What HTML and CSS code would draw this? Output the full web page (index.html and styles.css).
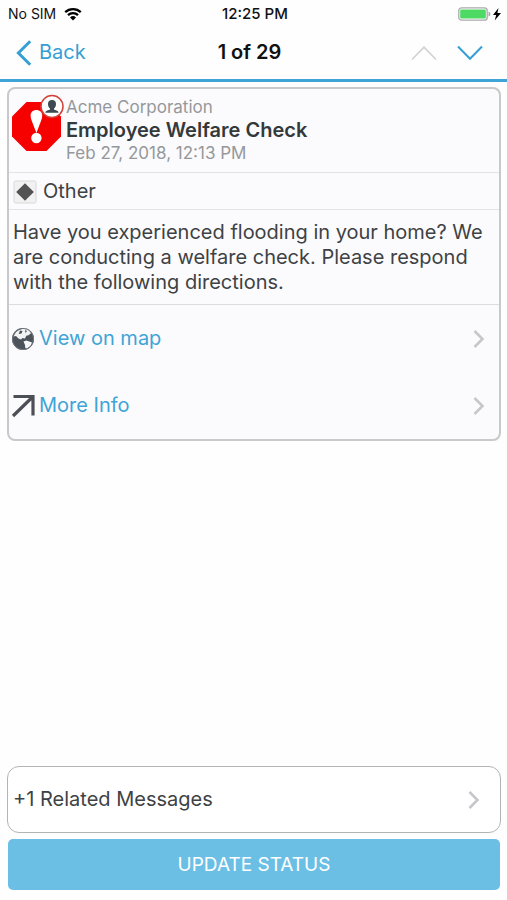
FILE: index.html
```html
<!DOCTYPE html>
<html lang="en">
<head>
<meta charset="utf-8">
<meta name="viewport" content="width=device-width, initial-scale=1">
<title>Employee Welfare Check</title>
<link rel="stylesheet" href="styles.css">
</head>
<body>
<div class="statusbar">
  <div class="carrier">
    <span>No SIM</span>
    <svg width="18" height="14" viewBox="0 0 18 14" aria-hidden="true">
      <path d="M1.2 5.2a11.2 11.2 0 0 1 15.6 0M4 8.2a7.2 7.2 0 0 1 10 0" fill="none" stroke="#000" stroke-width="2.3"/>
      <path d="M9 13.4 6 10.4a4.3 4.3 0 0 1 6 0z"/>
    </svg>
  </div>
  <span class="clock">12:25 PM</span>
  <div class="power">
    <svg width="44" height="14" viewBox="0 0 44 14" aria-hidden="true">
      <rect x=".8" y=".8" width="28.4" height="12.4" rx="2.8" fill="#fff" stroke="#aaa" stroke-width="1.3"/>
      <rect x="2.2" y="2.4" width="25.6" height="9.2" rx="1" fill="#4cd964"/>
      <path d="M30.5 4.5q2 .5 2 2.5t-2 2.5z" fill="#aaa"/>
      <path d="M40.5 1 35 8h3.2l-1.5 5.500 6.300-7.500h-3.600z"/>
    </svg>
  </div>
</div>
<header class="navbar">
  <button class="back" type="button">
    <svg width="16" height="26" viewBox="0 0 16 26" aria-hidden="true"><path d="M14.2 1.2 2.4 13l11.8 11.8" fill="none" stroke="currentColor" stroke-width="3"/></svg>
    <span>Back</span>
  </button>
  <h1 class="title">1 of 29</h1>
  <div class="pager">
    <button type="button" aria-label="Previous message" disabled>
      <svg width="26" height="16" viewBox="0 0 26 16" aria-hidden="true"><path d="M1 14.5 13 2.2l12 12.3" fill="none" stroke="currentColor" stroke-width="1.7"/></svg>
    </button>
    <button type="button" aria-label="Next message">
      <svg width="26" height="16" viewBox="0 0 26 16" aria-hidden="true"><path d="M1 1.5 13 13.8l12-12.3" fill="none" stroke="currentColor" stroke-width="2"/></svg>
    </button>
  </div>
</header>
<main class="content">
  <article class="card">
    <div class="summary">
      <svg class="alert" width="52" height="58" viewBox="0 0 52 58" aria-hidden="true">
        <path d="M14.5 8h20L49 22.5v20L34.5 57h-20L0 42.5v-20z" fill="#f60000"/>
        <path d="M24.400 16c3.600 0 5.800 2.400 5.800 5.500 0 2-.6 4-1.400 6l-4.400 11.500-4.400-11.500c-.8-2-1.400-4-1.400-6 0-3.100 2.200-5.500 5.800-5.500z" fill="#fff"/>
        <circle cx="24.400" cy="44" r="5.200" fill="#fff"/>
        <circle cx="40" cy="12.500" r="11" fill="#fff" stroke="#d0423a" stroke-width="1.500"/>
        <path d="M40 6c2.700 0 4 1.600 4 4 0 2-.8 3.500-2 4.500v1c1 1 4.600.8 4.600 3.200H33.400c0-2.400 3.600-2.200 4.600-3.200v-1c-1.200-1-2-2.500-2-4.500 0-2.400 1.300-4 4-4z" fill="#3d4a52"/>
      </svg>
      <div class="heading">
        <p class="meta">Acme Corporation</p>
        <h2 class="subject">Employee Welfare Check</h2>
        <p class="meta">Feb 27, 2018, 12:13 PM</p>
      </div>
    </div>
    <div class="category">
      <svg width="24" height="24" viewBox="0 0 24 24" aria-hidden="true">
        <rect x="1" y="1" width="22" height="22" rx="1.5" fill="#f1f1f2" stroke="#d8d8d9"/>
        <path d="M12 3.200 20.800 12 12 20.800 3.200 12z" fill="#525252"/>
      </svg>
      <span>Other</span>
    </div>
    <p class="message">Have you experienced flooding in your home? We are conducting a welfare check. Please respond with the following directions.</p>
    <a class="action" href="#map">
      <svg width="24" height="24" viewBox="0 0 24 24" aria-hidden="true">
        <circle cx="12" cy="12" r="11" fill="#4c535b"/>
        <path d="M9 2.500 14 1.300l4.500 2 1.500 3-2.500 2-2.200.5-1.300 2.700-2.500-.5-1.500 1.500-2.500-1-2.500-2.500-2.500.5L5 5z" fill="#f1f2f3"/>
        <path d="m12.500 14.500 3-1 3.500 1.300 2 .7-1.500 3.500-3.500 2.500-1.700-.5-.3-3z" fill="#f6f7f8"/>
        <path d="m9 3.500 2.500.5-1 2.500-2.800.5zM14 3l2 1-1.500 2z" fill="#4c535b"/>
        <circle cx="12" cy="12" r="10.600" fill="none" stroke="#70767d"/>
      </svg>
      <span class="label">View on map</span>
      <svg class="chevron" width="12" height="18" viewBox="0 0 12 18" aria-hidden="true"><path d="m1.500 1 8 8-8 8" fill="none" stroke="currentColor" stroke-width="2.600"/></svg>
    </a>
    <a class="action" href="#info">
      <svg width="24" height="24" viewBox="0 0 24 24" aria-hidden="true"><path d="M2.500 2.500h19.500v19M21 3.500 2 22" fill="none" stroke="#4c4f55" stroke-width="3.200"/></svg>
      <span class="label">More Info</span>
      <svg class="chevron" width="12" height="18" viewBox="0 0 12 18" aria-hidden="true"><path d="m1.500 1 8 8-8 8" fill="none" stroke="currentColor" stroke-width="2.600"/></svg>
    </a>
  </article>
</main>
<footer class="footer">
  <a class="related" href="#related">
    <span class="label">+1 Related Messages</span>
    <svg class="chevron" width="12" height="18" viewBox="0 0 12 18" aria-hidden="true"><path d="m1.500 1 8 8-8 8" fill="none" stroke="currentColor" stroke-width="2.600"/></svg>
  </a>
  <button class="update" type="button">UPDATE STATUS</button>
</footer>
</body>
</html>
```
FILE: styles.css
```css
* {
  box-sizing: border-box;
}

body {
  margin: 0;
  min-height: 100vh;
  display: flex;
  flex-direction: column;
  background: #fefefe;
  color: #3e4244;
  font-family: Inter, "Liberation Sans", sans-serif;
  font-size: 20px;
  line-height: 25px;
}

h1,
h2,
p {
  margin: 0;
}

svg {
  display: block;
  flex: none;
}

a {
  color: inherit;
  text-decoration: none;
}

button {
  margin: 0;
  padding: 0;
  border: 0;
  background: none;
  color: inherit;
  font: inherit;
}

.statusbar,
.navbar {
  display: grid;
  grid-template-columns: 1fr auto 1fr;
  align-items: center;
}

.statusbar {
  height: 27px;
  padding: 0 5px 0 8px;
  color: #111;
  font-size: 14px;
  line-height: 20px;
}

.carrier {
  display: flex;
  align-items: center;
  gap: 8px;
}

.clock {
  font-size: 15px;
  font-weight: 500;
}

.power {
  justify-self: end;
}

.navbar {
  height: 55px;
  padding: 0 24px 1px 16px;
  border-bottom: 3px solid #3fa4d6;
  color: #369fd3;
}

.back {
  display: flex;
  align-items: center;
  gap: 7px;
}

.title {
  color: #111;
  font-size: 20px;
  font-weight: 600;
}

.pager {
  display: flex;
  justify-self: end;
  gap: 20px;
}

.pager button:disabled {
  color: #d2d2d4;
}

.content {
  flex: 1;
  padding: 5px 6px 0 7px;
}

.card {
  border: 2px solid #c9c9cb;
  border-radius: 8px;
  background: #fbfbfd;
}

.summary {
  display: flex;
  gap: 2px;
  padding: 5px 3px 8px;
}

.heading {
  padding-top: 2px;
}

.meta {
  color: #95989a;
  font-size: 17px;
  line-height: 22px;
}

.subject {
  color: #34393b;
  font-size: 20px;
  font-weight: 600;
  line-height: 24px;
}

.category {
  display: flex;
  align-items: center;
  gap: 6px;
  padding: 6px 4px 5px;
  border-top: 1px solid #e4e4e6;
}

.message {
  padding: 10px 4px 9px;
  border-top: 1px solid #e4e4e6;
  border-bottom: 1px solid #dcdcdf;
}

.action,
.related {
  display: flex;
  align-items: center;
  gap: 4px;
  height: 67px;
}

.action {
  padding: 0 14px 0 2px;
  color: #3fa4d6;
}

.label {
  flex: 1;
}

.chevron {
  color: #c7c7cb;
}

.footer {
  display: flex;
  flex-direction: column;
  gap: 6px;
  padding: 0 6px 10px 7px;
}

.related {
  padding: 0 20px 0 5px;
  border: 1px solid #b4b4b4;
  border-radius: 12px;
  background: #fff;
}

.update {
  height: 51px;
  margin: 0 1px;
  border-radius: 5px;
  background: #6bbfe5;
  color: #fff;
  font-size: 19px;
}
```
